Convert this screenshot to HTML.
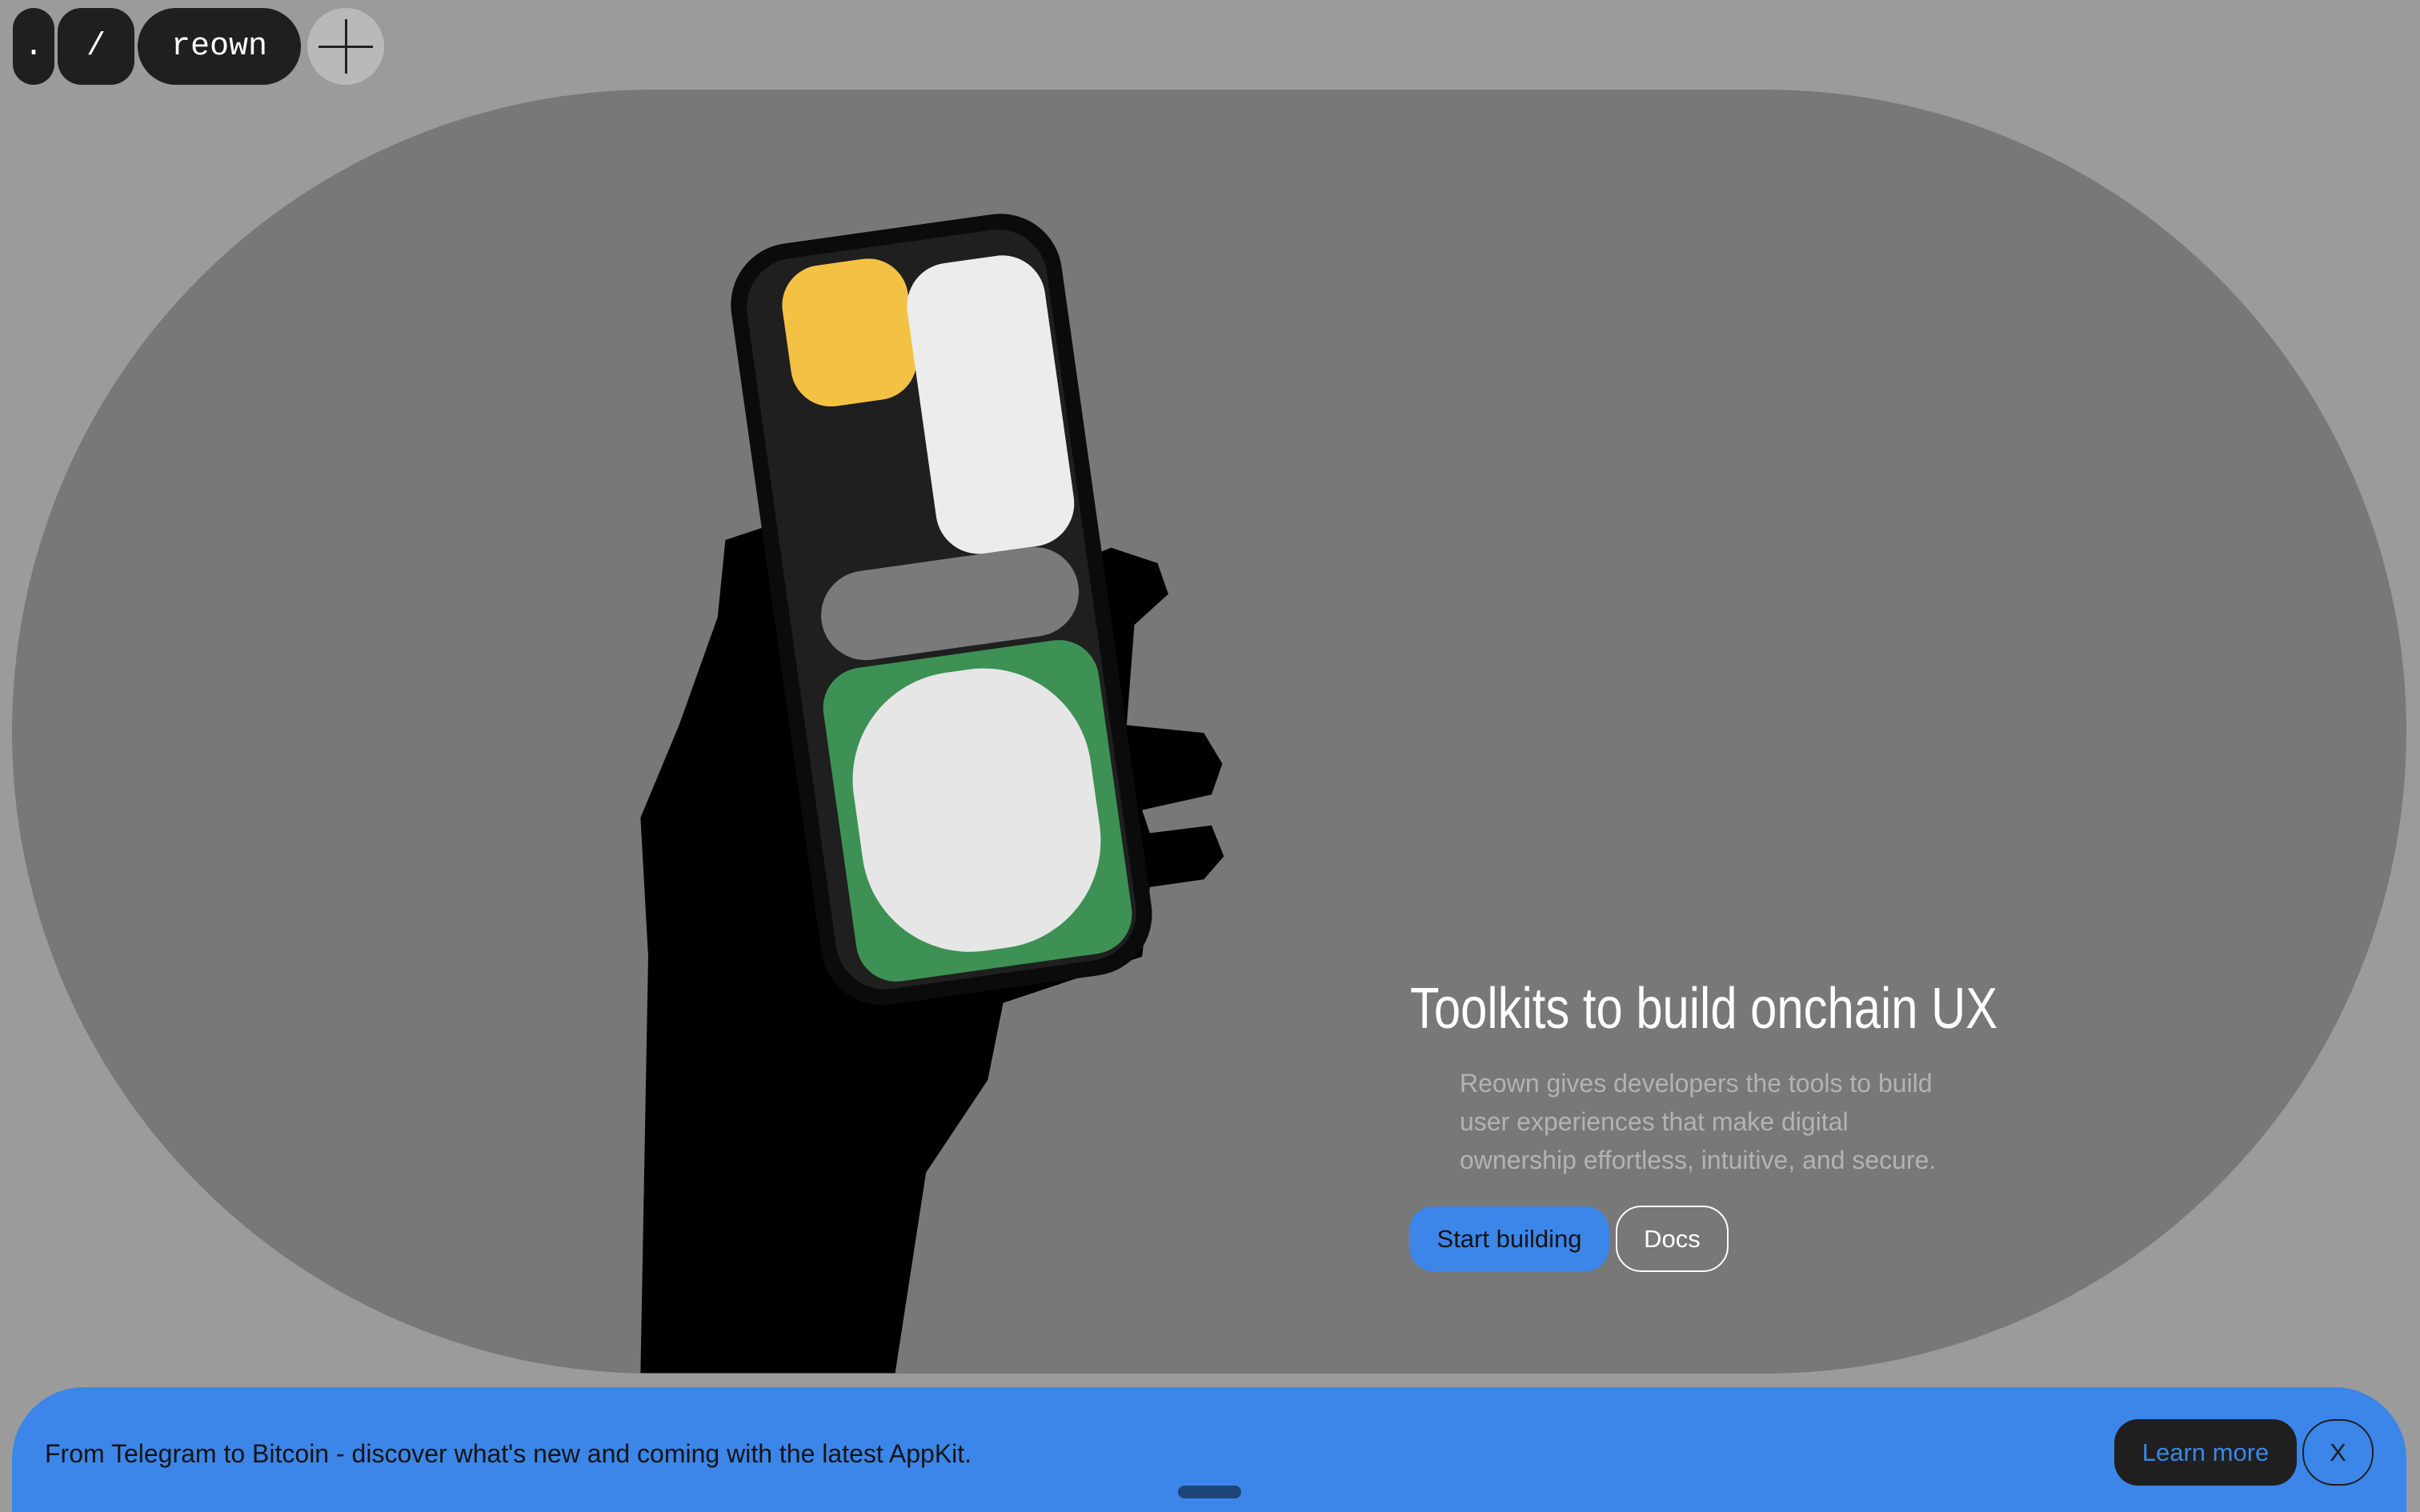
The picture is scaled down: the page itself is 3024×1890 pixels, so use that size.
<!DOCTYPE html>
<html><head><meta charset="utf-8"><style>
*{margin:0;padding:0;box-sizing:border-box}
html,body{width:3024px;height:1890px;overflow:hidden;background:#9b9b9b;font-family:"Liberation Sans",sans-serif}
#w{position:relative;width:3024px;height:1890px;overflow:hidden}
.pill{position:absolute;background:#1f1f1f;color:#fff;display:flex;align-items:center;justify-content:center;font-family:"Liberation Mono",monospace;font-size:40px}
.hero{position:absolute;left:15px;top:112px;width:2992px;height:1605px;border-radius:803px;background:#787878;overflow:hidden}
.t{position:absolute;white-space:nowrap;transform-origin:0 0}
</style></head><body><div id="w">
<div class="pill" style="left:16px;top:10px;width:52px;height:96px;border-radius:26px">.</div>
<div class="pill" style="left:72px;top:10px;width:96px;height:96px;border-radius:30px">/</div>
<div class="pill" style="left:172px;top:10px;width:204px;height:96px;border-radius:48px">reown</div>
<div style="position:absolute;left:384px;top:10px;width:96px;height:96px;border-radius:50%;background:#b9b9b9">
<div style="position:absolute;left:47px;top:14px;width:3px;height:68px;background:#222"></div>
<div style="position:absolute;left:14px;top:47px;width:68px;height:3px;background:#222"></div></div>
<div class="hero"></div>
<svg style="position:absolute;left:0;top:0" width="3024" height="1890" viewBox="0 0 1568 980">
<defs><clipPath id="c"><rect x="8" y="58" width="1551" height="832" rx="416"/></clipPath></defs>
<g clip-path="url(#c)">
<path d="M415,890 L420,620 L415,530 L440,470 L465,400 L470,350 L500,340 L560,420 L720,355 L750,365 L757,385 L735,405 L730,470 L780,475 L792,495 L785,515 L740,525 L745,540 L785,535 L793,555 L780,570 L745,575 L740,620 L650,650 L640,700 L600,760 L580,890 Z" fill="#000"/>
<g transform="rotate(-8 610 395)">
<rect x="502" y="146" width="216" height="498" rx="40" fill="#0b0b0b"/>
<rect x="512" y="156" width="196" height="478" rx="32" fill="#1f1f1f"/>
<rect x="535" y="163" width="82" height="92" rx="26" fill="#f3c245"/>
<rect x="615" y="173" width="90" height="190" rx="28" fill="#ececec"/>
<rect x="532" y="363" width="168" height="58" rx="29" fill="#7a7a7a"/>
<rect x="525" y="425" width="180" height="205" rx="26" fill="#3d9154"/>
<rect x="537" y="436" width="155" height="182" rx="70" fill="#e6e6e6"/>
</g></g>
</svg>
<div class="t" style="left:1762px;top:1220px;font-size:72px;color:#fff;transform:scaleX(0.83)">Toolkits to build onchain UX</div>
<div class="t" style="left:1824px;top:1330px;font-size:32px;line-height:48px;color:#b3b3b3">Reown gives developers the tools to build<br>user experiences that make digital<br>ownership effortless, intuitive, and secure.</div>
<div style="position:absolute;left:1761px;top:1508px;width:250px;height:81px;border-radius:30px;background:#3b86e8;color:#141414;font-size:31px;display:flex;align-items:center;justify-content:center">Start building</div>
<div style="position:absolute;left:2019px;top:1507px;width:141px;height:83px;border-radius:32px;border:2px solid #fff;color:#fff;font-size:31px;display:flex;align-items:center;justify-content:center">Docs</div>
<div style="position:absolute;left:15px;top:1734px;width:2992px;height:240px;border-radius:90px;background:#3b86e8"></div>
<div class="t" style="left:56px;top:1799px;font-size:32px;color:#141414">From Telegram to Bitcoin - discover what's new and coming with the latest AppKit.</div>
<div style="position:absolute;left:2642px;top:1774px;width:228px;height:83px;border-radius:30px;background:#1f1f1f;color:#3b86e8;font-size:31px;display:flex;align-items:center;justify-content:center">Learn more</div>
<div style="position:absolute;left:2877px;top:1774px;width:89px;height:83px;border-radius:40px;border:2px solid #1f1f1f;color:#1f1f1f;font-size:31px;display:flex;align-items:center;justify-content:center">X</div>
<div style="position:absolute;left:1472px;top:1857px;width:79px;height:16px;border-radius:8px;background:#1f4477"></div>
</div></body></html>
